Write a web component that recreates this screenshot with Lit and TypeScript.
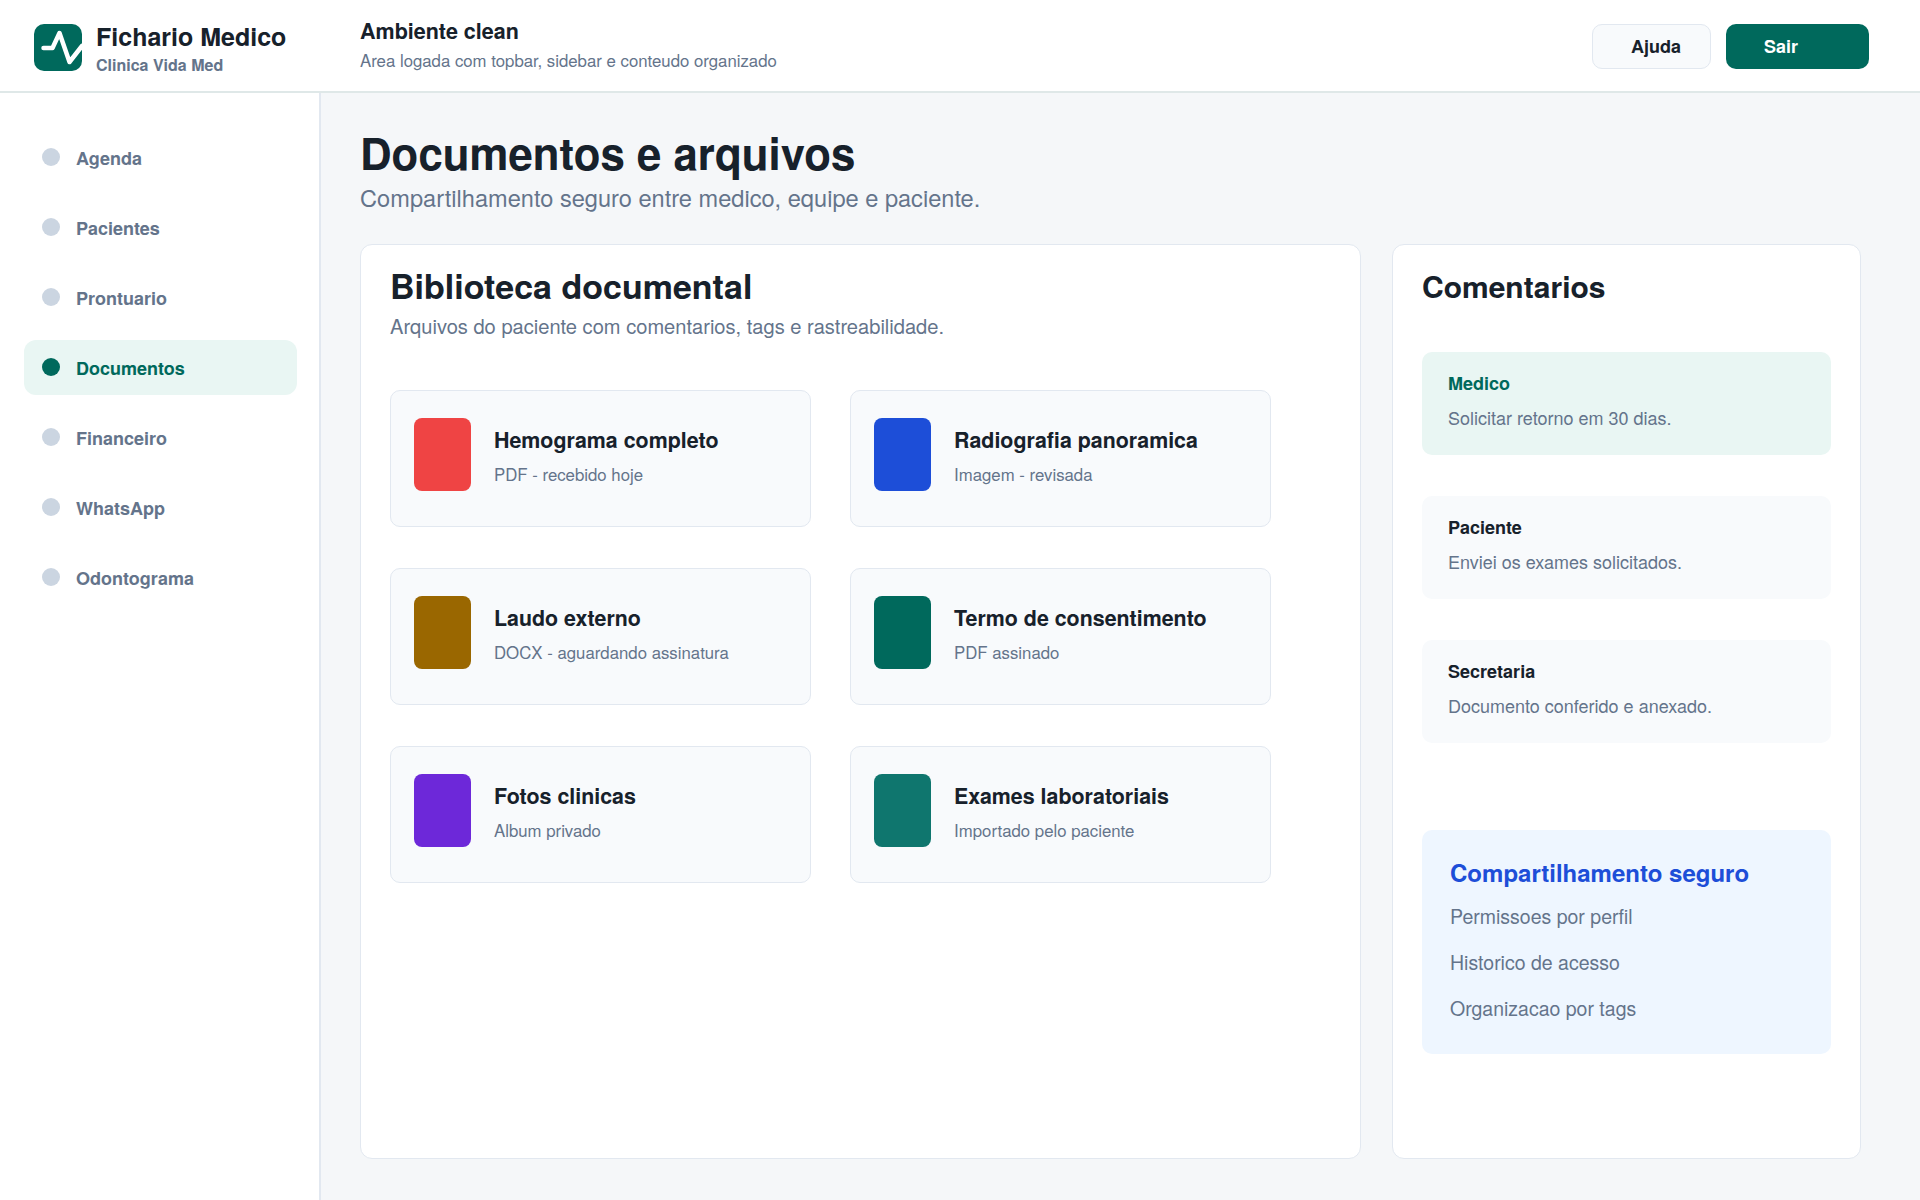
import { LitElement, html, css } from "lit";
import { customElement } from "lit/decorators.js";

const NAV = ["Agenda", "Pacientes", "Prontuario", "Documentos", "Financeiro", "WhatsApp", "Odontograma"];
const ACTIVE_NAV = "Documentos";

const DOCS = [
  { title: "Hemograma completo", sub: "PDF - recebido hoje", color: "#ef4444" },
  { title: "Radiografia panoramica", sub: "Imagem - revisada", color: "#1d4ed8" },
  { title: "Laudo externo", sub: "DOCX - aguardando assinatura", color: "#9a6700" },
  { title: "Termo de consentimento", sub: "PDF assinado", color: "#00695c" },
  { title: "Fotos clinicas", sub: "Album privado", color: "#6d28d9" },
  { title: "Exames laboratoriais", sub: "Importado pelo paciente", color: "#0f766e" },
];

const COMMENTS = [
  { who: "Medico", text: "Solicitar retorno em 30 dias.", highlight: true },
  { who: "Paciente", text: "Enviei os exames solicitados.", highlight: false },
  { who: "Secretaria", text: "Documento conferido e anexado.", highlight: false },
];

const SHARE_ITEMS = ["Permissoes por perfil", "Historico de acesso", "Organizacao por tags"];

@customElement("app-root")
export class AppRoot extends LitElement {
  static styles = css`
    :host {
      display: block;
      width: 1920px;
      height: 1200px;
      overflow: hidden;
      background: #f5f7f9;
      color: #17212b;
      font-family: "TeX Gyre Heros", "Liberation Sans", Arial, sans-serif;
    }

    .topbar {
      box-sizing: border-box;
      height: 93px;
      background: #fff;
      border-bottom: 2px solid #dfe8e8;
      display: flex;
      align-items: center;
    }

    .brand {
      width: 360px;
      box-sizing: border-box;
      padding: 5px 0 0 34px;
      display: flex;
      align-items: center;
      gap: 14px;
    }

    .logo {
      width: 48px;
      height: 47px;
      margin-top: -2px;
      border-radius: 10px;
      background: #00695c;
      flex: none;
      overflow: hidden;
    }

    .brand-name {
      font-size: 25px;
      font-weight: 700;
      line-height: 30px;
    }

    .brand-sub {
      font-size: 16px;
      font-weight: 700;
      line-height: 20px;
      color: #64748b;
      margin-top: 4px;
    }

    .context {
      flex: 1;
      padding-bottom: 3px;
    }

    .context-title {
      font-size: 21.5px;
      font-weight: 700;
      line-height: 26px;
    }

    .context-sub {
      font-size: 16.8px;
      line-height: 22px;
      color: #64748b;
      margin-top: 5px;
    }

    .actions {
      display: flex;
      gap: 15px;
      padding: 2px 51px 0 0;
    }

    .btn {
      box-sizing: border-box;
      height: 45px;
      padding-bottom: 1px;
      border-radius: 10px;
      font-size: 18px;
      font-weight: 700;
      display: flex;
      align-items: center;
    }

    .btn.help {
      width: 119px;
      padding-left: 38px;
      background: #f8fafc;
      border: 1px solid #e2e8f0;
    }

    .btn.exit {
      width: 143px;
      padding-left: 38px;
      background: #00695c;
      color: #fff;
    }

    .body {
      display: flex;
      height: 1107px;
    }

    .sidebar {
      box-sizing: border-box;
      width: 321px;
      flex: none;
      background: #fff;
      border-right: 2px solid #e2e8f0;
      padding: 37px 22px 0 24px;
      display: flex;
      flex-direction: column;
      gap: 15px;
    }

    .nav-item {
      height: 55px;
      border-radius: 12px;
      padding: 0 18px;
      box-sizing: border-box;
      display: flex;
      align-items: center;
      gap: 16px;
      font-size: 18px;
      font-weight: 700;
      color: #64748b;
    }

    .nav-item .dot {
      width: 18px;
      height: 18px;
      border-radius: 50%;
      background: #cbd5e1;
      margin-top: -2px;
    }

    .nav-item.active {
      background: #e9f6f3;
      color: #00695c;
    }

    .nav-item.active .dot {
      background: #00695c;
    }

    .main {
      flex: 1;
      box-sizing: border-box;
      padding: 32px 0 0 39px;
    }

    h1 {
      margin: 0;
      font-size: 43.8px;
      line-height: 54px;
      font-weight: 700;
    }

    .page-sub {
      font-size: 23.6px;
      line-height: 30px;
      color: #64748b;
      margin-top: 3px;
    }

    .columns {
      display: flex;
      gap: 31px;
      margin-top: 32px;
    }

    .panel {
      box-sizing: border-box;
      height: 915px;
      background: #fff;
      border: 1px solid #e2e8f0;
      border-radius: 12px;
    }

    .library {
      width: 1001px;
      padding: 19px 29px;
    }

    .library h2 {
      margin: 0;
      font-size: 34px;
      line-height: 42px;
      font-weight: 700;
    }

    .library-sub {
      font-size: 20.1px;
      line-height: 26px;
      color: #64748b;
      margin-top: 7px;
    }

    .doc-grid {
      display: grid;
      grid-template-columns: 421px 421px;
      grid-auto-rows: 137px;
      column-gap: 39px;
      row-gap: 41px;
      margin-top: 51px;
    }

    .doc {
      box-sizing: border-box;
      background: #f8fafc;
      border: 1px solid #e2e8f0;
      border-radius: 10px;
      padding: 27px 23px 0;
      display: flex;
      gap: 23px;
    }

    .doc-icon {
      width: 57px;
      height: 73px;
      border-radius: 8px;
      flex: none;
    }

    .doc-title {
      font-size: 21.4px;
      font-weight: 700;
      line-height: 26px;
      margin-top: 9px;
    }

    .doc-sub {
      font-size: 16.8px;
      line-height: 22px;
      color: #64748b;
      margin-top: 10px;
    }

    .side {
      width: 469px;
      padding: 22px 29px;
    }

    .side h2 {
      margin: 0;
      font-size: 30px;
      line-height: 38px;
      font-weight: 700;
    }

    .comments {
      display: flex;
      flex-direction: column;
      gap: 41px;
      margin-top: 47px;
    }

    .comment {
      height: 103px;
      box-sizing: border-box;
      border-radius: 10px;
      background: #f8fafc;
      padding: 20px 26px;
    }

    .comment.highlight {
      background: #e9f6f3;
    }

    .comment-who {
      font-size: 18px;
      font-weight: 700;
      line-height: 22px;
    }

    .comment.highlight .comment-who {
      color: #00695c;
    }

    .comment-text {
      font-size: 18px;
      line-height: 22px;
      color: #64748b;
      margin-top: 11.5px;
    }

    .share {
      box-sizing: border-box;
      height: 224px;
      border-radius: 10px;
      background: #eef6ff;
      padding: 28px;
      margin-top: 87px;
    }

    .share-title {
      font-size: 24px;
      font-weight: 700;
      line-height: 28px;
      color: #1d4ed8;
      margin-bottom: 17px;
    }

    .share-item {
      font-size: 19.5px;
      line-height: 26px;
      color: #64748b;
      margin-bottom: 20px;
    }
  `;

  protected render() {
    return html`
      <header class="topbar">
        <div class="brand">
          <div class="logo">
            <svg viewBox="0 0 48 47" width="48" height="47" fill="none" stroke="#fff" stroke-width="4.5" stroke-linecap="round" stroke-linejoin="round">
              <path d="M9.5 24H18.5L25.5 9L35.5 38L48 22" />
            </svg>
          </div>
          <div>
            <div class="brand-name">Fichario Medico</div>
            <div class="brand-sub">Clinica Vida Med</div>
          </div>
        </div>
        <div class="context">
          <div class="context-title">Ambiente clean</div>
          <div class="context-sub">Area logada com topbar, sidebar e conteudo organizado</div>
        </div>
        <div class="actions">
          <div class="btn help">Ajuda</div>
          <div class="btn exit">Sair</div>
        </div>
      </header>
      <div class="body">
        <nav class="sidebar">
          ${NAV.map(
            (item) => html`<div class="nav-item ${item === ACTIVE_NAV ? "active" : ""}">
              <span class="dot"></span>${item}
            </div>`,
          )}
        </nav>
        <main class="main">
          <h1>Documentos e arquivos</h1>
          <div class="page-sub">Compartilhamento seguro entre medico, equipe e paciente.</div>
          <div class="columns">
            <section class="panel library">
              <h2>Biblioteca documental</h2>
              <div class="library-sub">Arquivos do paciente com comentarios, tags e rastreabilidade.</div>
              <div class="doc-grid">
                ${DOCS.map(
                  (doc) => html`<div class="doc">
                    <div class="doc-icon" style="background:${doc.color}"></div>
                    <div>
                      <div class="doc-title">${doc.title}</div>
                      <div class="doc-sub">${doc.sub}</div>
                    </div>
                  </div>`,
                )}
              </div>
            </section>
            <aside class="panel side">
              <h2>Comentarios</h2>
              <div class="comments">
                ${COMMENTS.map(
                  (c) => html`<div class="comment ${c.highlight ? "highlight" : ""}">
                    <div class="comment-who">${c.who}</div>
                    <div class="comment-text">${c.text}</div>
                  </div>`,
                )}
              </div>
              <div class="share">
                <div class="share-title">Compartilhamento seguro</div>
                ${SHARE_ITEMS.map((item) => html`<div class="share-item">${item}</div>`)}
              </div>
            </aside>
          </div>
        </main>
      </div>
    `;
  }
}
